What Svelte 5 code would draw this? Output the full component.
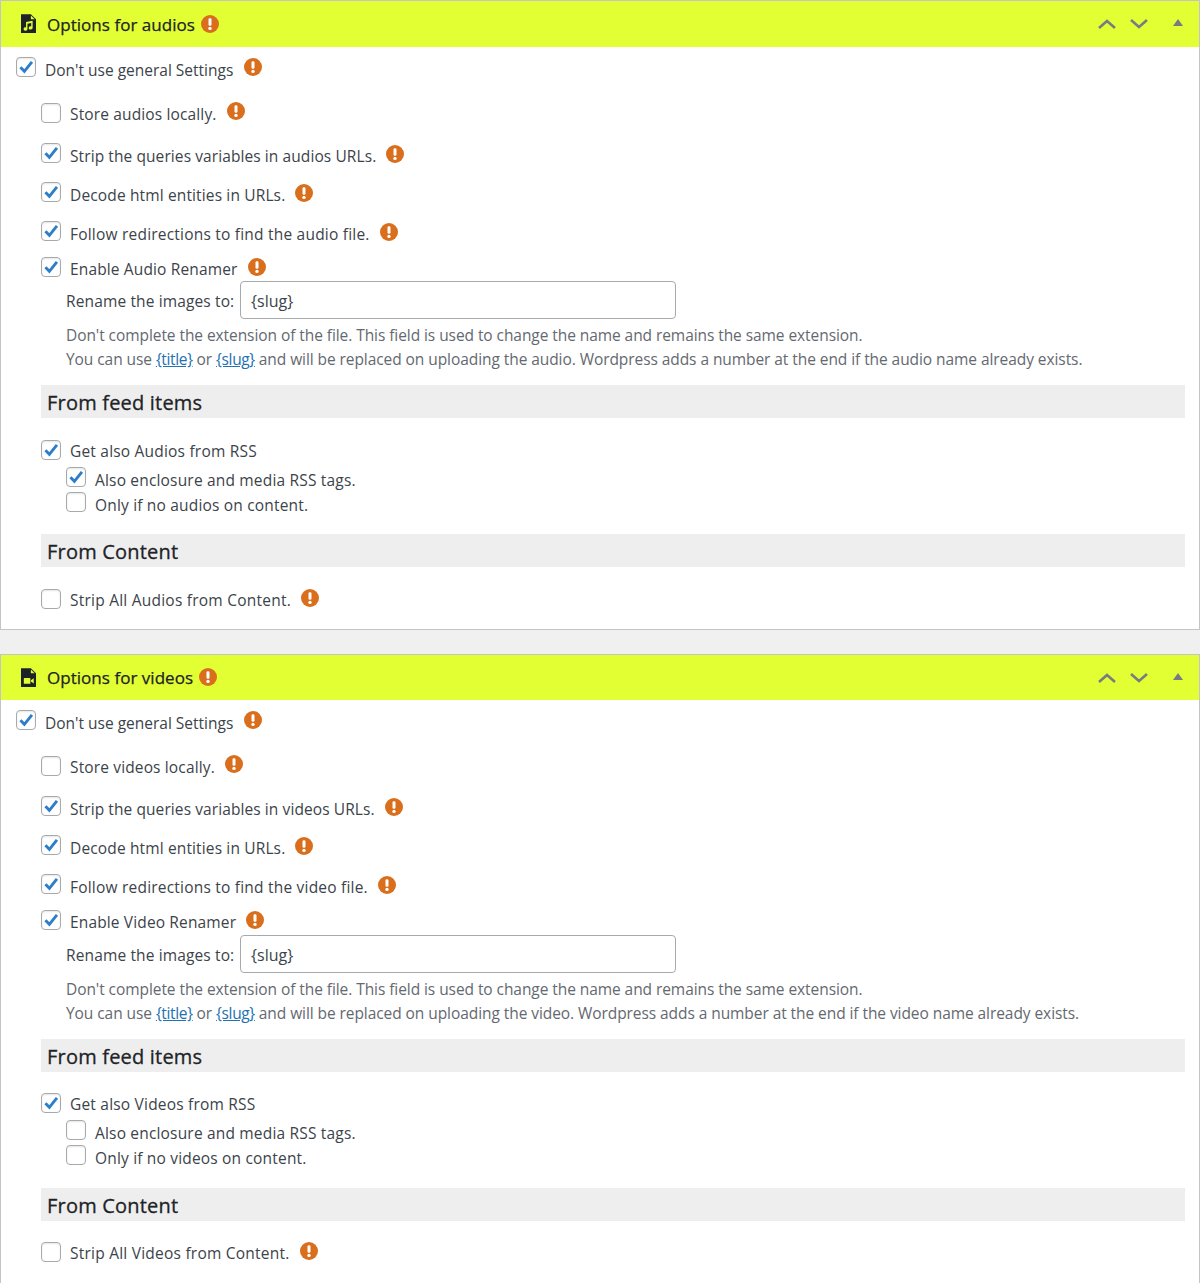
<script>
  const panels = [
    { kind: 'audio', title: 'Options for audios', plural: 'audios', Cap: 'Audio', CapP: 'Audios', a: true },
    { kind: 'video', title: 'Options for videos', plural: 'videos', Cap: 'Video', CapP: 'Videos', a: false }
  ];
</script>

{#snippet alert()}
  <svg class="alert" viewBox="0 0 18 18" aria-hidden="true">
    <circle cx="9" cy="9" r="9" fill="#d96e1c" />
    <rect x="7.5" y="3.2" width="3" height="7.6" rx="1.3" fill="#fff" />
    <circle cx="9" cy="13.4" r="1.7" fill="#fff" />
  </svg>
{/snippet}

{#snippet box(on)}
  <span class="box">
    {#if on}
      <svg viewBox="0 0 20 20" aria-hidden="true"><path d="M3.8 10.2 8.2 14.8 16.6 4.2" fill="none" stroke="#2b7ec9" stroke-width="3.2" /></svg>
    {/if}
  </span>
{/snippet}

{#snippet row(cls, on, text, warn)}
  <div class="row {cls}">
    {@render box(on)}
    <span class="txt">{text}</span>
    {#if warn}{@render alert()}{/if}
  </div>
{/snippet}

<div class="page">
  {#each panels as p}
    <section class="panel {p.kind}">
      <header class="head">
        <svg class="file" viewBox="0 0 16 20" aria-hidden="true">
          <path d="M0 0h10.5L16 5.5V20H0z" fill="#1d2327" />
          <path d="M10.5 1.4V5.5h4.1z" fill="#e2ff33" />
          {#if p.kind === 'audio'}
            <path d="M5.4 8.4 12.4 7v7.6a2.1 1.8 0 1 1-1.5-1.6V9.4L6.9 10.2v5.6a2.1 1.8 0 1 1-1.5-1.6z" fill="#e2ff33" />
          {:else}
            <rect x="3" y="10.6" width="7" height="6" rx=".6" fill="#e2ff33" />
            <path d="M10.6 13 13.6 10.8v5.6l-3-2.2z" fill="#e2ff33" />
          {/if}
        </svg>
        <h2>{p.title}</h2>
        {@render alert()}
        <div class="ctrls">
          <svg viewBox="0 0 20 12" aria-hidden="true"><path d="M2 10 10 3l8 7" /></svg>
          <svg viewBox="0 0 20 12" aria-hidden="true"><path d="M2 2l8 7 8-7" /></svg>
          <span class="tri"></span>
        </div>
      </header>
      <div class="body">
        {@render row('general', true, "Don't use general Settings", true)}
        <div class="opts">
          {@render row('store', false, `Store ${p.plural} locally.`, true)}
          {@render row('strip', true, `Strip the queries variables in ${p.plural} URLs.`, true)}
          {@render row('plain', true, 'Decode html entities in URLs.', true)}
          {@render row('plain follow', true, `Follow redirections to find the ${p.kind} file.`, true)}
          {@render row('renamer', true, `Enable ${p.Cap} Renamer`, true)}
          <div class="rename">
            <label class="lbl" for="slug-{p.kind}">Rename the images to:</label>
            <input id="slug-{p.kind}" value="{'{slug}'}" />
          </div>
          <p class="desc first">Don't complete the extension of the file. This field is used to change the name and remains the same extension.</p>
          <p class="desc">You can use <a href="#t">{'{title}'}</a> or <a href="#s">{'{slug}'}</a> and will be replaced on uploading the {p.kind}. Wordpress adds a number at the end if the {p.kind} name already exists.</p>
          <h3 class="bar feed">From feed items</h3>
          {@render row('rss', true, `Get also ${p.CapP} from RSS`, false)}
          {@render row('sub enc', p.a, 'Also enclosure and media RSS tags.', false)}
          {@render row('sub only', false, `Only if no ${p.plural} on content.`, false)}
          <h3 class="bar content">From Content</h3>
          {@render row('last', false, `Strip All ${p.CapP} from Content.`, true)}
        </div>
      </div>
    </section>
  {/each}
</div>

<style>
  :global(body) {
    margin: 0;
    background: #f0f0f1;
  }
  .page {
    width: 1200px;
    height: 1283px;
    overflow: hidden;
    font-family: "Open Sans", "Noto Sans", sans-serif;
    color: #3c434a;
    font-size: 15.5px;
  }
  .panel {
    height: 628px;
    background: #fff;
    border: 1px solid #c3c4c7;
    width: 1198px;
    margin-bottom: 24px;
  }
  .head {
    height: 46px;
    background: #e2ff33;
    display: flex;
    align-items: center;
    padding-left: 20px;
  }
  .video .head {
    height: 45px;
  }
  .file {
    width: 15px;
    height: 19px;
    margin-right: 11px;
    margin-bottom: 1px;
  }
  h2 {
    margin: 0 6px 0 0;
    font-size: 17px;
    font-weight: 500;
    color: #1d2327;
    letter-spacing: 0.03px;
    -webkit-text-stroke: 0.25px #1d2327;
  }
  .head .alert {
    margin-bottom: 1px;
  }
  .ctrls {
    margin-left: auto;
    display: flex;
    align-items: center;
    padding-right: 16px;
  }
  .ctrls svg {
    width: 20px;
    height: 12px;
    margin-right: 12px;
  }
  .ctrls path {
    fill: none;
    stroke: #787c82;
    stroke-width: 2.6;
  }
  .tri {
    width: 0;
    height: 0;
    margin-left: 12px;
    margin-bottom: 3px;
    border-left: 5px solid transparent;
    border-right: 5px solid transparent;
    border-bottom: 7px solid #787c82;
  }
  .alert {
    width: 18px;
    height: 18px;
    flex: none;
  }
  .row {
    display: flex;
    align-items: flex-start;
    height: 22px;
  }
  .box {
    width: 18px;
    height: 18px;
    flex: none;
    margin-top: 1px;
    border: 1px solid #a7aaad;
    border-radius: 4px;
    background: #fff;
    box-shadow: inset 0 1px 2px rgba(0, 0, 0, 0.1);
    display: block;
  }
  .box svg {
    display: block;
    width: 18px;
    height: 18px;
  }
  .rss .box,
  .sub .box,
  .last .box {
    margin-top: 0;
  }
  .txt {
    margin-left: 9px;
    line-height: 22px;
    letter-spacing: 0.14px;
    white-space: nowrap;
  }
  .row .alert {
    margin-left: 10px;
  }
  .body {
    padding: 9px 0 0 15px;
  }
  .general .txt {
    margin-top: 3px;
    letter-spacing: 0;
  }
  .general .alert {
    margin-top: 2px;
    margin-left: 11px;
  }
  .opts {
    padding-left: 25px;
  }
  .store {
    margin-top: 24px;
  }
  .store .txt {
    margin-top: 1px;
  }
  .strip {
    margin-top: 18px;
  }
  .strip .txt {
    letter-spacing: 0.09px;
  }
  .strip .txt,
  .plain .txt {
    margin-top: 3px;
  }
  .strip .alert,
  .plain .alert {
    margin-top: 3px;
  }
  .follow .txt {
    letter-spacing: 0.21px;
  }
  .plain {
    margin-top: 17px;
  }
  .renamer {
    margin-top: 14px;
  }
  .renamer .txt {
    margin-top: 2px;
  }
  .renamer .alert {
    margin-top: 2px;
  }
  .rename {
    display: flex;
    align-items: center;
    height: 38px;
    margin: 3px 0 0 25px;
  }
  .video .rename {
    margin-top: 4px;
  }
  .lbl {
    width: 174px;
    padding-top: 2px;
    letter-spacing: 0.13px;
    white-space: nowrap;
  }
  input {
    width: 436px;
    height: 38px;
    box-sizing: border-box;
    border: 1px solid #a7aaad;
    border-radius: 4px;
    padding: 2px 10px 0;
    font: inherit;
    font-size: 16px;
    color: #3c434a;
    background: #fff;
    margin: 0;
  }
  .desc {
    margin: 0 0 0 25px;
    line-height: 24px;
    color: #646970;
    letter-spacing: -0.07px;
    white-space: nowrap;
    height: 24px;
  }
  .desc.first {
    margin-top: 4px;
  }
  .desc a {
    color: #2271b1;
    letter-spacing: -0.35px;
  }
  .bar {
    margin: 0;
    width: 1138px;
    height: 33px;
    padding-left: 6px;
    background: #eee;
    color: #1d2327;
    font-size: 20px;
    font-weight: 500;
    line-height: 35px;
    letter-spacing: 0.2px;
    -webkit-text-stroke: 0.3px #1d2327;
  }
  .feed {
    margin-top: 14px;
  }
  .rss {
    margin-top: 22px;
  }
  .video .rss {
    margin-top: 21px;
  }
  .rss .txt {
    margin-top: 0;
    letter-spacing: 0.2px;
  }
  .sub {
    padding-left: 25px;
    height: 20px;
  }
  .sub .txt {
    margin-top: 2px;
    letter-spacing: 0.18px;
  }
  .enc {
    margin-top: 5px;
  }
  .only {
    margin-top: 5px;
  }
  .content {
    margin-top: 22px;
  }
  .video .content {
    margin-top: 23px;
  }
  .last {
    margin-top: 22px;
  }
  .video .last {
    margin-top: 21px;
  }
  .last .txt {
    margin-top: 0;
    letter-spacing: 0.23px;
  }
</style>
